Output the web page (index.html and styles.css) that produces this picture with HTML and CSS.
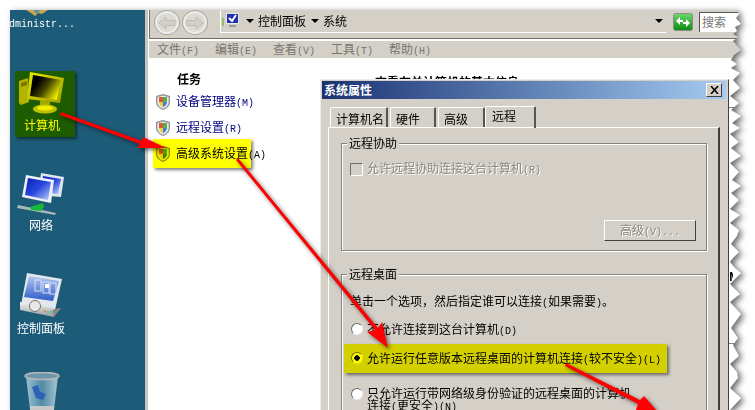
FILE: index.html
```html
<!DOCTYPE html>
<html lang="zh-CN">
<head>
    <meta charset="UTF-8">
    <title>系统属性</title>
    <link rel="stylesheet" href="styles.css">
</head>
<body>
<svg class="defs" width="0" height="0">
    <defs>
        <linearGradient id="screenBlue" x1="0" y1="0" x2="1" y2="1">
            <stop offset="0" stop-color="#0a1fb8"/>
            <stop offset="0.5" stop-color="#2a48e0"/>
            <stop offset="1" stop-color="#c4d4f8"/>
        </linearGradient>
        <linearGradient id="screenDark" x1="0" y1="0" x2="1" y2="0.6">
            <stop offset="0.3" stop-color="#000"/>
            <stop offset="0.6" stop-color="#444"/>
            <stop offset="1" stop-color="#e8e8e8"/>
        </linearGradient>
        <linearGradient id="metal" x1="0" y1="0" x2="0" y2="1">
            <stop offset="0" stop-color="#f4f4f4"/>
            <stop offset="1" stop-color="#9a9a9a"/>
        </linearGradient>
        <linearGradient id="frameShade" x1="0" y1="0" x2="1" y2="1">
            <stop offset="0" stop-color="#e8e8e8"/>
            <stop offset="1" stop-color="#a0a0a0"/>
        </linearGradient>
        <linearGradient id="panelBlue" x1="0" y1="0" x2="0" y2="1">
            <stop offset="0" stop-color="#b4c8f0"/>
            <stop offset="1" stop-color="#2c5cc8"/>
        </linearGradient>
        <linearGradient id="goGreen" x1="0" y1="0" x2="0" y2="1">
            <stop offset="0" stop-color="#6fd86f"/>
            <stop offset="1" stop-color="#0c8a10"/>
        </linearGradient>
        <linearGradient id="binGlass" x1="0" y1="0" x2="1" y2="0">
            <stop offset="0" stop-color="#9cc0d0"/>
            <stop offset="0.5" stop-color="#4f8aa6"/>
            <stop offset="1" stop-color="#a8c6d2"/>
        </linearGradient>
        <symbol id="shield" viewBox="0 0 14 16">
            <path d="M7 0 L14 2 V8 C14 12 10.500 14.500 7 16 C3.500 14.500 0 12 0 8 V2 Z" fill="#8f8f8f"/>
            <path d="M7 1.500 L12.700 3 V8 C12.700 11.500 10 13.500 7 14.700 C4 13.500 1.300 11.500 1.300 8 V3 Z" fill="#e8e8e8"/>
            <path d="M7 3 H3 V8 H7 Z" fill="#e0563a"/>
            <path d="M7 3 H11 V8 H7 Z" fill="#56b04a"/>
            <path d="M3 8 H7 V13 C5 12.400 3.300 10.500 3 8 Z" fill="#f2cc30"/>
            <path d="M11 8 H7 V13 C9 12.400 10.700 10.500 11 8 Z" fill="#3f7fe0"/>
        </symbol>
    </defs>
</svg>

<div class="shadow">
<div class="screen">
    <div class="desktop">
        <svg class="user-icon" width="22" height="6" viewBox="0 0 22 6">
            <path d="M0 0 H22 L16 4 L12 3 L9 6 L5 3 Z" fill="#c8a848"/>
            <path d="M8 0 H14 L12 3 H9 Z" fill="#5d8fb0"/>
        </svg>
        <div class="user-name">Administr...</div>

        <div class="desk-item item-computer">
            <svg width="46" height="42" viewBox="0 0 46 42">
                <path d="M0 9 L9 6 L10 30 L2 33 L0 31 Z" fill="#b4b4b4"/>
                <path d="M2 11 L8 9 V13 L2 15 Z" fill="#777"/>
                <path d="M11 0 L45 6 L41 31 L8 27 Z" fill="url(#frameShade)"/>
                <path d="M14 3 L42 8 L38 28 L11 24 Z" fill="url(#screenDark)"/>
                <path d="M21 28 L31 30 L31 34 L21 33 Z" fill="#a8a8a8"/>
                <ellipse cx="26" cy="37" rx="12" ry="4.500" fill="#c0c0c0"/>
                <ellipse cx="26" cy="36" rx="8" ry="2.500" fill="#efefef"/>
            </svg>
            <span>计算机</span>
        </div>

        <div class="desk-item item-network">
            <svg width="48" height="42" viewBox="0 0 48 42">
                <path d="M24 0 L47 4 L44 24 L21 22 Z" fill="#dfe6ee"/>
                <path d="M26 3 L44 6 L41 21 L24 19 Z" fill="url(#screenBlue)"/>
                <path d="M9 2 L37 7 L34 30 L5 24 Z" fill="#eef2f6"/>
                <path d="M11 5 L34 9 L31 27 L8 22 Z" fill="url(#screenBlue)"/>
                <path d="M1 32 L39 40 L38 42 L0 35 Z" fill="#a9b8b8"/>
                <path d="M13 34 L26 30 L27 34 L24 38 L14 37 Z" fill="#18b83a"/>
            </svg>
            <span>网络</span>
        </div>

        <div class="desk-item item-panel">
            <svg width="44" height="45" viewBox="0 0 44 45">
                <path d="M8 0 L43 6 L36 37 L2 32 Z" fill="#e4e8ee"/>
                <path d="M10 3 L40 8 L34 28 L5 24 Z" fill="url(#panelBlue)"/>
                <g fill="none" stroke="#d6e2fa" stroke-width="1">
                    <rect x="16" y="7" width="6" height="11"/>
                    <rect x="24" y="9" width="6" height="11"/>
                    <rect x="31" y="10" width="6" height="11"/>
                </g>
                <rect x="26" y="11" width="4" height="4" fill="#fff"/>
                <path d="M1 29 L34 35 L35 44 L1 37 Z" fill="url(#metal)"/>
                <path d="M35 36 L42 35 L35 44 Z" fill="#888"/>
                <circle cx="16" cy="33" r="5.500" fill="#e8e8e8" stroke="#777"/>
                <rect x="25" y="37" width="2" height="2" fill="#e8902c"/>
                <rect x="28" y="38" width="2" height="2" fill="#48c0e0"/>
                <rect x="31" y="38" width="2" height="2" fill="#60c040"/>
            </svg>
            <span>控制面板</span>
        </div>

        <div class="desk-item item-bin">
            <svg width="36" height="38" viewBox="0 0 36 38">
                <path d="M2 4 L34 4 L30 38 H6 Z" fill="url(#binGlass)"/>
                <ellipse cx="18" cy="4" rx="17" ry="3.500" fill="#6c97aa" stroke="#b9b9b9" stroke-width="1.500"/>
                <path d="M8 15 L14 13 L16 20 L22 22 L19 28 L12 26 Z" fill="#2c62b8"/>
                <path d="M6 34 H30 V38 H6 Z" fill="#c8c8c8"/>
            </svg>
        </div>
        <div class="mark mark-computer"></div>
    </div>

    <div class="window">
        <div class="toolbar">
            <div class="nav-btn"><svg width="18" height="14" viewBox="0 0 18 14"><path d="M1 7 L8 1 V4.500 H17 V9.500 H8 V13 Z" fill="#d4d0c8" stroke="#bdbbb4"/></svg></div>
            <div class="nav-btn nav-next"><svg width="18" height="14" viewBox="0 0 18 14"><path d="M17 7 L10 1 V4.500 H1 V9.500 H10 V13 Z" fill="#d4d0c8" stroke="#bdbbb4"/></svg></div>
            <div class="address">
                <svg class="address-icon" width="20" height="18" viewBox="0 0 20 18">
                    <rect x="1" y="6" width="2" height="8" fill="#8fbf6c"/>
                    <rect x="5" y="1" width="13" height="11" fill="#e8e8e8"/>
                    <rect x="6" y="2" width="11" height="9" fill="#2030b0"/>
                    <path d="M8 6 L11 9 L15 3" fill="none" stroke="#fff" stroke-width="2"/>
                    <rect x="8" y="13" width="7" height="2" fill="#9a9a9a"/>
                </svg>
                <span class="caret crumb-caret"></span>
                <span class="crumb">控制面板</span>
                <span class="caret crumb-caret"></span>
                <span class="crumb">系统</span>
                <span class="caret address-drop"></span>
            </div>
            <svg class="go-btn" width="20" height="18" viewBox="0 0 20 18">
                <rect x="0.500" y="0.500" width="19" height="17" rx="2" fill="url(#goGreen)" stroke="#8d8d85"/>
                <path d="M3 8 L7 4 V7 H10 V9 H7 V12 Z M17 10 L13 14 V11 H10 V9 H13 V6 Z" fill="#fff"/>
            </svg>
            <div class="search">搜索</div>
        </div>
        <div class="menubar">
            <span>文件<i>(F)</i></span>
            <span>编辑<i>(E)</i></span>
            <span>查看<i>(V)</i></span>
            <span>工具<i>(T)</i></span>
            <span>帮助<i>(H)</i></span>
        </div>
        <div class="content">
            <div class="tasks">
                <h3>任务</h3>
                <div class="task"><svg width="14" height="16"><use href="#shield"/></svg><span>设备管理器<i>(M)</i></span></div>
                <div class="task"><svg width="14" height="16"><use href="#shield"/></svg><span>远程设置<i>(R)</i></span></div>
                <div class="task task-on"><svg width="14" height="16"><use href="#shield"/></svg><span>高级系统设置<i>(A)</i></span></div>
            </div>
            <div class="page-title">查看有关计算机的基本信息</div>
        </div>
        <div class="mark mark-task"></div>
    </div>

    <div class="dialog">
        <div class="titlebar">
            <span>系统属性</span>
            <div class="close"><svg width="9" height="8" viewBox="0 0 9 8"><path d="M1 0 L8 8 M8 0 L1 8" stroke="#000" stroke-width="1.600"/></svg></div>
        </div>
        <div class="tabs">
            <div class="tab tab-first">计算机名</div>
            <div class="tab tab-hw">硬件</div>
            <div class="tab tab-adv">高级</div>
            <div class="tab tab-active">远程</div>
        </div>
        <div class="tab-panel">
            <div class="group group-assist">
                <div class="group-title">远程协助</div>
                <div class="check-row">
                    <span class="checkbox"></span>
                    <span class="disabled">允许远程协助连接这台计算机<i>(R)</i></span>
                </div>
                <div class="btn-row"><div class="btn">高级<i>(V)...</i></div></div>
            </div>
            <div class="group group-desk">
                <div class="group-title">远程桌面</div>
                <p class="hint">单击一个选项，然后指定谁可以连接<i>(</i>如果需要<i>)</i>。</p>
                <div class="radio-row row-first"><span class="radio"></span><span>不允许连接到这台计算机<i>(D)</i></span></div>
                <div class="radio-row row-second"><span class="radio radio-on"></span><span>允许运行任意版本远程桌面的计算机连接<i>(</i>较不安全<i>)(L)</i></span></div>
                <div class="radio-row row-third"><span class="radio"></span><span>只允许运行带网络级身份验证的远程桌面的计算机<br>连接<i>(</i>更安全<i>)(N)</i></span></div>
            </div>
            <div class="mark mark-radio"></div>
        </div>
    </div>

    <div class="sliver sliver-m">M</div>
    <div class="sliver sliver-line line-top"></div>
    <div class="sliver sliver-line line-low"></div>
    <svg class="arrows" width="755" height="410" viewBox="0 0 755 410">
        <path d="M61 112 L142 141 L143 137 L166 148 L137 148 L140 144 L60 115 Z" fill="#f00"/>
        <path d="M236 160 L238 158 L378 328 L382 322 L388 348 L367 332 L375 330 Z" fill="#f00"/>
        <path d="M565 366 L566 363 L640 400 L644 396 L665 420 L636 410 L638 404 Z" fill="#f00"/>
    </svg>
</div>
</div>
</body>
</html>
```

FILE: styles.css
```css
html, body {
    margin: 0;
    padding: 0;
    background: #fff;
}

body {
    width: 755px;
    height: 410px;
    overflow: hidden;
    font-family: "Noto Sans CJK SC", "Liberation Sans", sans-serif;
    font-size: 12px;
    line-height: 14px;
    color: #000;
}

i {
    font-family: "Liberation Mono", monospace;
    font-style: normal;
    font-size: 10px;
}

.defs {
    position: absolute;
}

.shadow {
    width: 755px;
    height: 410px;
    filter: drop-shadow(3px 2px 3px rgba(0, 0, 0, 0.6));
}

/* torn right edge of the capture */
.screen {
    position: relative;
    display: flex;
    box-sizing: border-box;
    width: 755px;
    height: 410px;
    padding: 10px 0 0 10px;
    background: #1d5c78;
    clip-path: polygon(10px 10px, 736px 10px, 739px 14px, 736px 18px, 741px 24px, 735px 27px, 737px 31px, 733px 34px, 738px 37px, 733px 41px, 741px 50px, 734px 55px, 731px 60px, 737px 64px, 731px 68px, 740px 73px, 733px 80px, 740px 88px, 730px 96px, 739px 103px, 731px 110px, 741px 116px, 732px 123px, 740px 128px, 730px 134px, 739px 142px, 731px 148px, 741px 156px, 730px 163px, 739px 172px, 732px 180px, 741px 186px, 731px 193px, 739px 200px, 730px 209px, 740px 215px, 730px 223px, 739px 230px, 737px 236px, 731px 244px, 739px 252px, 733px 258px, 730px 262px, 735px 268px, 741px 273px, 730px 284px, 740px 294px, 730px 302px, 741px 314px, 731px 328px, 738px 338px, 733px 345px, 739px 356px, 730px 364px, 737px 372px, 738px 378px, 730px 388px, 741px 398px, 730px 410px, 10px 410px);
}

/* desktop */
.desktop {
    position: relative;
    flex: 0 0 135px;
    overflow: hidden;
}

.user-icon {
    position: absolute;
    left: 16px;
    top: 0;
}

.user-name {
    position: absolute;
    left: -7px;
    top: 8px;
    color: #fff;
    font-family: "Liberation Mono", monospace;
    font-size: 10px;
}

.desk-item {
    position: absolute;
    width: 64px;
    display: flex;
    flex-direction: column;
    align-items: center;
    color: #fff;
}

.item-computer { left: 0; top: 62px; }
.item-computer span { margin-top: 4px; }
.item-network { left: -1px; top: 163px; }
.item-network span { margin-top: 3px; }
.item-panel { left: -1px; top: 263px; }
.item-panel span { margin-top: 3px; }
.item-bin { left: 0; top: 362px; }

.mark {
    position: absolute;
    background: #ff0;
    mix-blend-mode: multiply;
    box-shadow: 2px 2px 3px rgba(0, 0, 0, 0.5);
}

.mark-computer { left: 5px; top: 61px; width: 60px; height: 66px; }
.mark-task { left: 5px; top: 129px; width: 98px; height: 29px; }
.mark-radio { left: 15px; top: 216px; width: 323px; height: 29px; }

/* explorer window */
.window {
    position: relative;
    flex: 1;
    display: flex;
    flex-direction: column;
    border-left: 3px solid #c8c6be;
    padding-left: 1px;
    background: #fff;
}

.toolbar {
    display: flex;
    align-items: flex-start;
    box-sizing: border-box;
    height: 29px;
    padding-left: 4px;
    background: #d4d0c8;
    border-left: 1px solid #6f6e68;
    border-bottom: 1px solid #6f6e68;
}

.nav-btn {
    display: flex;
    align-items: center;
    justify-content: center;
    box-sizing: border-box;
    width: 26px;
    height: 25px;
    border: 1px solid #a9a8a2;
    border-radius: 50%;
    background: #dcdad4;
    box-shadow: inset 0 0 0 2px #eeece8;
}

.nav-next {
    margin-left: 2px;
}

.address {
    display: flex;
    align-items: center;
    box-sizing: border-box;
    width: 446px;
    height: 23px;
    margin-left: 12px;
    padding-left: 0;
    border-left: 1px solid #fff;
    border-bottom: 1px solid #fff;
}

.caret {
    width: 0;
    height: 0;
    border-left: 4px solid transparent;
    border-right: 4px solid transparent;
    border-top: 4px solid #000;
}

.crumb-caret {
    margin: 0 4px 0 5px;
}

.address-drop {
    margin-left: auto;
    margin-right: 3px;
}

.go-btn {
    margin: 3px 0 0 7px;
}

.search {
    box-sizing: border-box;
    width: 60px;
    height: 20px;
    margin: 2px 0 0 6px;
    padding: 2px 0 0 2px;
    background: #fff;
    border-top: 1px solid #555;
    border-left: 1px solid #555;
    color: #777;
}

.menubar {
    display: flex;
    gap: 22px;
    box-sizing: border-box;
    height: 18px;
    margin-top: 1px;
    padding: 1px 0 0 8px;
    background: #d4d0c8;
    border-top: 1px solid #fff;
    color: #77756f;
}

.menubar span {
    width: 36px;
    white-space: nowrap;
}

.content {
    position: relative;
    flex: 1;
    overflow: hidden;
}

.tasks {
    padding: 14px 0 0 7px;
}

.tasks h3 {
    margin: 0 0 3px 21px;
    font-size: 12px;
    line-height: 14px;
    font-weight: bold;
}

.task {
    display: flex;
    align-items: center;
    gap: 6px;
    height: 26px;
    color: #000080;
}

.task-on {
    color: #000;
}

.page-title {
    position: absolute;
    left: 226px;
    top: 17px;
    font-weight: bold;
}

/* dialog */
.dialog {
    position: absolute;
    left: 320px;
    top: 79px;
    box-sizing: border-box;
    width: 409px;
    height: 331px;
    overflow: hidden;
    padding: 1px 2px 0 1px;
    background: #d4d0c8;
    border-top: 1px solid #eeece8;
    border-left: 1px solid #eeece8;
    border-right: 1px solid #404040;
}

.titlebar {
    display: flex;
    align-items: center;
    justify-content: space-between;
    height: 18px;
    padding: 0 4px 0 2px;
    background: linear-gradient(to right, #1b3273, #6486b8 55%, #a6caf0);
    color: #fff;
    font-weight: bold;
}

.close {
    display: flex;
    align-items: center;
    justify-content: center;
    box-sizing: border-box;
    width: 16px;
    height: 14px;
    background: #d4d0c8;
    border: 1px solid;
    border-color: #fff #404040 #404040 #fff;
}

.tabs {
    display: flex;
    align-items: flex-end;
    height: 28px;
    padding-left: 8px;
}

.tab {
    box-sizing: border-box;
    height: 20px;
    margin-right: 2px;
    padding: 4px 0 0 5px;
    border-top: 1px solid #fff;
    border-left: 1px solid #fff;
    border-right: 2px solid #555;
    border-radius: 2px 2px 0 0;
}

.tab-first { width: 58px; }
.tab-hw { width: 46px; }
.tab-adv { width: 47px; margin-right: 0; }

.tab-active {
    position: relative;
    z-index: 1;
    width: 51px;
    height: 22px;
    margin-right: 0;
    margin-bottom: -1px;
    padding: 2px 0 0 6px;
}

.tab-panel {
    position: relative;
    box-sizing: border-box;
    height: 300px;
    margin: 0 6px;
    padding: 15px 12px 0;
    border-top: 1px solid #fff;
    border-left: 1px solid #fff;
    border-right: 2px solid #404040;
}

.group {
    box-sizing: border-box;
    width: 366px;
    padding: 0 8px;
    border: 1px solid #85837d;
    box-shadow: 1px 1px 0 #fff, inset 1px 1px 0 #fff;
}

.group-title {
    width: max-content;
    margin: -8px 0 0 -3px;
    padding: 0 2px;
    background: #d4d0c8;
}

.group-assist {
    height: 108px;
}

.group-desk {
    height: 170px;
    margin-top: 23px;
}

.check-row {
    display: flex;
    align-items: center;
    gap: 4px;
    margin-top: 11px;
}

.checkbox {
    box-sizing: border-box;
    width: 13px;
    height: 13px;
    border: 1px solid;
    border-color: #6f6e68 #fff #fff #6f6e68;
    background: #d4d0c8;
}

.disabled {
    color: #8a8882;
    text-shadow: 1px 1px 0 #fff;
}

.btn-row {
    display: flex;
    justify-content: flex-end;
    margin: 42px 2px 0 0;
}

.btn {
    box-sizing: border-box;
    width: 92px;
    height: 21px;
    padding-top: 2px;
    text-align: center;
    color: #8a8882;
    text-shadow: 1px 1px 0 #fff;
    border: 1px solid;
    border-color: #fff #404040 #404040 #fff;
    background: #d4d0c8;
}

.hint {
    margin: 13px 0 0 0;
}

.radio-row {
    display: flex;
    align-items: flex-start;
    gap: 4px;
    margin-left: 1px;
}

.row-first { margin-top: 11px; }
.row-second { margin-top: 12px; }
.row-third { margin-top: 19px; line-height: 12px; }

.radio {
    box-sizing: border-box;
    flex: none;
    width: 12px;
    height: 12px;
    margin-top: 1px;
    border: 1px solid;
    border-color: #6f6e68 #eee #eee #6f6e68;
    border-radius: 50%;
    background: #fff;
}

.radio-on {
    background: radial-gradient(circle, #000 0 2.500px, #fff 3px);
}

/* bits of the window behind the dialog */
.sliver {
    position: absolute;
    left: 729px;
}

.sliver-m {
    top: 269px;
    width: 4px;
    overflow: hidden;
    font-weight: bold;
}

.sliver-line {
    width: 11px;
    height: 1px;
    background: #85837d;
}

.line-top { top: 107px; }
.line-low { top: 343px; }

.arrows {
    position: absolute;
    left: 0;
    top: 0;
    filter: drop-shadow(2px 2px 2px rgba(0, 0, 0, 0.55));
}
```
